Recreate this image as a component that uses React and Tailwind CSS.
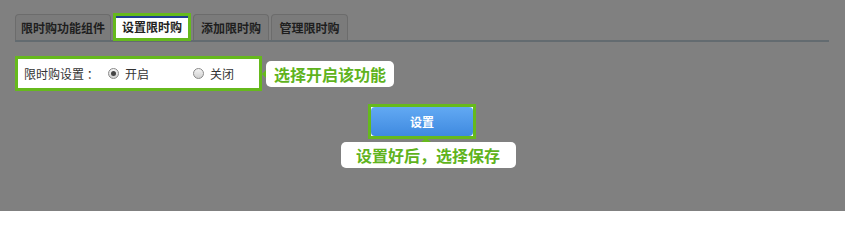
import React from 'react';

const font = { fontFamily: '"Noto Sans CJK SC", "Noto Sans", sans-serif' };

const Tab = ({ label, width, active }) => {
    if (active) {
        return (
            <div className={`relative h-[28px] ${width} border-[3px] border-[#66b91c] bg-white flex items-center justify-center text-[12px] font-bold text-[#222] -mb-px`}>
                <div className="absolute top-0 left-0 right-0 h-[2px] bg-[#1f3f8f]" />
                {label}
            </div>
        );
    }
    return (
        <div className={`h-[26px] ${width} border border-b-0 border-[#6c6c6c] rounded-t-[4px] bg-[#7b7b7b] flex items-center justify-center text-[12px] font-bold text-[#1e1e1e]`}>
            {label}
        </div>
    );
};

const Radio = ({ checked }) => (
    <span className="w-[11px] h-[11px] rounded-full border border-[#8a8a8a] bg-gradient-to-b from-[#f4f4f4] to-[#d0d0d0] flex items-center justify-center">
        {checked && <span className="w-[5px] h-[5px] rounded-full bg-[#444]" />}
    </span>
);

export default function App() {
    return (
        <div className="w-[845px] h-[211px] bg-[#808080] pt-[13px] pl-[15px] overflow-hidden" style={font}>
            {/* Tabs */}
            <div className="w-[814px] flex items-end gap-[2px] border-b-2 border-[#636b70]">
                <Tab label="限时购功能组件" width="w-[96px]" />
                <Tab label="设置限时购" width="w-[78px]" active />
                <Tab label="添加限时购" width="w-[76px]" />
                <Tab label="管理限时购" width="w-[77px]" />
            </div>

            {/* Setting row */}
            <div className="mt-[14px] flex items-center">
                <div className="w-[247px] h-[35px] border-[3px] border-[#66b91c] bg-white flex items-center pl-[6px] text-[12px] text-[#333]">
                    <span className="w-[84px]">限时购设置 ：</span>
                    <label className="flex items-center gap-[6px] w-[85px]">
                        <Radio checked />
                        开启
                    </label>
                    <label className="flex items-center gap-[6px]">
                        <Radio />
                        关闭
                    </label>
                </div>
                <div className="relative ml-[4px] h-[26px] px-[8px] bg-white rounded-[5px] flex items-center text-[16px] text-[#5fb31d] font-bold">
                    <span className="absolute left-[-4px] top-[9px] w-0 h-0 border-y-[4px] border-y-transparent border-r-[4px] border-r-[#66b91c]" />
                    选择开启该功能
                </div>
            </div>

            {/* Button + hint */}
            <div className="mt-[13px] w-[814px] flex flex-col items-center">
                <div className="border-[3px] border-[#66b91c] bg-white">
                    <div className="w-[102px] h-[29px] rounded-[4px] bg-gradient-to-b from-[#62a9f3] to-[#3f8ae0] flex items-center justify-center text-[12px] font-bold text-white">
                        设置
                    </div>
                </div>
                <div className="relative mt-[3px] ml-[12px] w-[175px] h-[26px] bg-white rounded-[5px] flex items-center justify-center text-[16px] text-[#5fb31d] font-bold">
                    <span className="absolute top-[-4px] left-[80px] w-0 h-0 border-x-[5px] border-x-transparent border-b-[4px] border-b-[#66b91c]" />
                    设置好后，选择保存
                </div>
            </div>
        </div>
    );
}
